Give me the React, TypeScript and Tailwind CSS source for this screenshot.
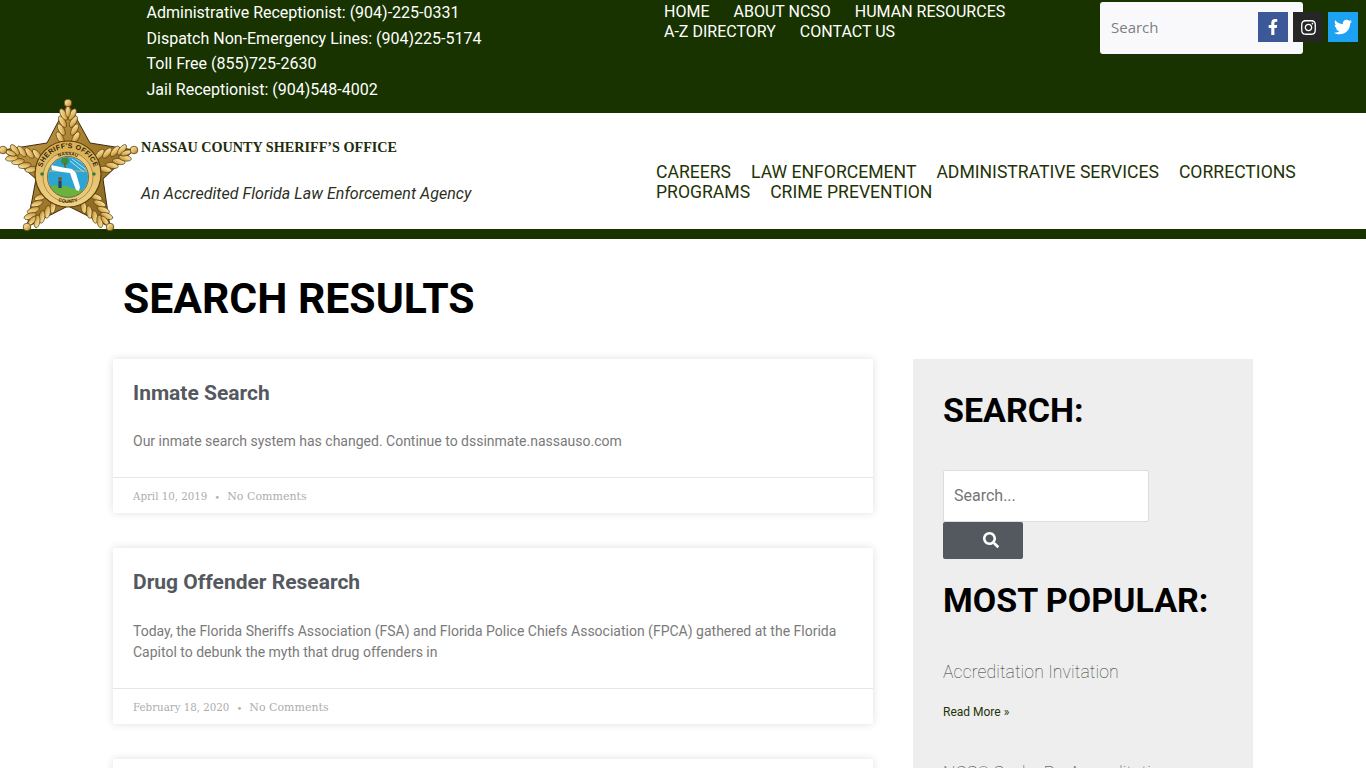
import React from "react";
import { FaFacebookF, FaInstagram, FaTwitter, FaSearch } from "react-icons/fa";

const tips: [number, number][] = [[68, 102], [134, 149], [110, 226], [27, 226], [3, 149]];
const inner: [number, number][] = [[90, 142], [103, 178], [68, 205], [36, 178], [47, 142]];

function Arm({ tip }: { tip: [number, number] }) {
  const cx = 68, cy = 174;
  const angle = (Math.atan2(tip[1] - cy, tip[0] - cx) * 180) / Math.PI + 90;
  const len = Math.hypot(tip[0] - cx, tip[1] - cy);
  const leaves = [0.52, 0.63, 0.74, 0.84];
  return (
    <g transform={`rotate(${angle} ${cx} ${cy})`}>
      {leaves.map((t, i) => {
        const y = cy - len * t;
        const spread = 11 * (1 - t) + 2.6;
        return (
          <g key={i}>
            <ellipse cx={cx - spread} cy={y} rx={2.9} ry={6.4} transform={`rotate(-30 ${cx - spread} ${y})`} fill="url(#leaf)" stroke="#5c4210" strokeWidth=".7" />
            <ellipse cx={cx + spread} cy={y} rx={2.9} ry={6.4} transform={`rotate(30 ${cx + spread} ${y})`} fill="url(#leaf)" stroke="#5c4210" strokeWidth=".7" />
          </g>
        );
      })}
      <ellipse cx={cx} cy={cy - len * 0.88} rx={2.5} ry={5.6} fill="url(#leaf)" stroke="#5c4210" strokeWidth=".7" />
    </g>
  );
}

function Star() {
  const pts: string[] = [];
  tips.forEach((t, i) => {
    pts.push(t.join(","));
    pts.push(inner[i].join(","));
  });
  return (
    <svg viewBox="0 0 140 136" width="140" height="136" className="block shrink-0 -mt-[16px] -mb-[4px] relative z-10">
      <defs>
        <linearGradient id="gold" x1="0" y1="0" x2="1" y2="1">
          <stop offset="0" stopColor="#cfa653" />
          <stop offset=".5" stopColor="#a37c2e" />
          <stop offset="1" stopColor="#7d5c1b" />
        </linearGradient>
        <linearGradient id="leaf" x1="0" y1="0" x2="1" y2="1">
          <stop offset="0" stopColor="#fff2c4" />
          <stop offset=".55" stopColor="#e3bb63" />
          <stop offset="1" stopColor="#a0762a" />
        </linearGradient>
        <linearGradient id="ring" x1="0" y1="0" x2="0" y2="1">
          <stop offset="0" stopColor="#d9ac4f" />
          <stop offset="1" stopColor="#efd388" />
        </linearGradient>
        <path id="arcTop" d="M41 174 A27 27 0 0 1 95 174" fill="none" />
        <path id="arcTop2" d="M46 176 A22 22 0 0 1 90 176" fill="none" />
        <path id="arcBottom" d="M42 176 A26 26 0 0 0 94 176" fill="none" />
        <clipPath id="seal"><circle cx="68" cy="176" r="20" /></clipPath>
      </defs>
      <g transform="translate(0 -96)">
        <polygon points={pts.join(" ")} fill="url(#gold)" stroke="#3f2d08" strokeWidth="1" strokeLinejoin="round" />
        {tips.map((t, i) => <Arm key={i} tip={t} />)}
        {tips.map((t, i) => <circle key={i} cx={t[0]} cy={t[1]} r="3.8" fill="url(#leaf)" stroke="#5c4210" strokeWidth=".8" />)}
        <circle cx="68" cy="173" r="33" fill="url(#ring)" stroke="#5a400d" strokeWidth="1.2" />
        <circle cx="68" cy="176" r="25" fill="#e9c878" stroke="#8a661f" strokeWidth=".6" />
        <text fontFamily="'Liberation Sans',sans-serif" fontWeight="700" fontSize="7" fill="#2d230a" letterSpacing=".35"><textPath href="#arcTop" startOffset="50%" textAnchor="middle">SHERIFF'S OFFICE</textPath></text>
        <text fontFamily="'Liberation Sans',sans-serif" fontWeight="700" fontSize="4.6" fill="#2d230a"><textPath href="#arcTop2" startOffset="50%" textAnchor="middle">NASSAU</textPath></text>
        <circle cx="68" cy="176" r="20.5" fill="#f7f0cf" />
        <g clipPath="url(#seal)">
          <rect x="46" y="154" width="44" height="44" fill="#2aa5d4" />
          <path d="M72 158 L88 170 M75 157 L89 166 M70 160 L84 171 M78 157 L90 162" stroke="#d9eff8" strokeWidth=".8" />
          <rect x="47" y="169.6" width="42" height=".9" fill="#d9bb67" />
          <path d="M46 186 Q62 182 72 187 Q82 191 90 188 L90 198 L46 198 Z" fill="#69b23c" />
          <circle cx="65" cy="160" r="3.8" fill="#3f8a3c" />
          <rect x="64.4" y="162" width="1.2" height="6" fill="#6b5120" />
          <path d="M51 164 L63 166.5 L72 168 L76 172 L80 186 L79 190 L76 189 L72 178 L70 172 L62 171 L52 169 Z" fill="#ffffff" />
          <circle cx="60" cy="178" r="2" fill="#7a5a22" />
          <rect x="58.4" y="180" width="3.2" height="7" fill="#24446e" />
        </g>
        <circle cx="68" cy="176" r="20.5" fill="none" stroke="#4a380d" strokeWidth=".7" />
        <circle cx="42" cy="173" r="1.7" fill="#2e7a3a" />
        <circle cx="94" cy="173" r="1.7" fill="#2e7a3a" />
        <text fontFamily="'Liberation Sans',sans-serif" fontWeight="700" fontSize="4.8" fill="#2d230a"><textPath href="#arcBottom" startOffset="50%" textAnchor="middle">COUNTY</textPath></text>
      </g>
    </svg>
  );
}

function Card({ title, text, date, two }: { title: string; text: React.ReactNode; date: string; two?: boolean }) {
  return (
    <article className="bg-white rounded-[2px] shadow-[0_0_8px_rgba(0,0,0,0.13)]">
      <div className="px-5 pt-[20px] pb-[25px] border-b border-[#e6e6e6]">
        <h3 className="text-[21px] leading-[28px] font-bold text-[#54595f]">{title}</h3>
        <p className={`${two ? "mt-[25px]" : "mt-[24px]"} text-[14px] leading-[21px] text-[#7a7a7a]`}>{text}</p>
      </div>
      <div className="px-5 h-[35px] pt-[3px] flex items-center font-['DejaVu_Serif',serif] text-[#adadad]">
        <span className="text-[10.25px]">{date}</span>
        <span className="mx-[7px] text-[10px]">•</span>
        <span className="text-[11px]">No Comments</span>
      </div>
    </article>
  );
}

export default function App() {
  return (
    <div className="h-[768px] overflow-hidden bg-white font-['Roboto',sans-serif]">
      <header>
        <div className="h-[113px] bg-[#183300] text-white flex">
          <div className="w-[664px] pl-[146.5px] text-[16px] leading-[25.6px] shrink-0">
            <p>Administrative Receptionist: (904)-225-0331</p>
            <p>Dispatch Non-Emergency Lines: (904)225-5174</p>
            <p>Toll Free (855)725-2630</p>
            <p>Jail Receptionist: (904)548-4002</p>
          </div>
          <nav className="w-[436px] shrink-0 pt-[2px] text-[16px] leading-[20px] flex flex-wrap content-start gap-x-[24px]">
            <span>HOME</span><span>ABOUT NCSO</span><span>HUMAN RESOURCES</span>
            <span>A-Z DIRECTORY</span><span>CONTACT US</span>
          </nav>
          <div className="flex items-start">
            <div className="mt-[2px] w-[203px] h-[52px] bg-[#f9f9fb] rounded-[3px] pl-[11px] pb-[1px] flex items-center font-['Open_Sans',sans-serif] text-[15px] text-[#7c7f83]">Search</div>
            <div className="flex gap-[5px] mt-[12px] -ml-[45px]">
              <span className="w-[30px] h-[30px] bg-[#3b5998] flex items-center justify-center text-[16px]"><FaFacebookF /></span>
              <span className="w-[30px] h-[30px] bg-[#262626] flex items-center justify-center text-[17px]"><FaInstagram /></span>
              <span className="w-[30px] h-[30px] bg-[#1da1f2] flex items-center justify-center text-[18px]"><FaTwitter /></span>
            </div>
          </div>
        </div>
        <div className="h-[126px] border-b-[10px] border-[#183300] flex">
          <Star />
          <div className="w-[516px] shrink-0 pl-[1px]">
            <p className="mt-[24px] font-['Liberation_Serif',serif] font-bold text-[14.2px] leading-[20px] text-[#1d2d0c]">NASSAU COUNTY SHERIFF’S OFFICE</p>
            <p className="mt-[27px] italic text-[16px] leading-[20px] tracking-[0.05px] text-[#2b2f22]">An Accredited Florida Law Enforcement Agency</p>
          </div>
          <nav className="pt-[49px] w-[690px] text-[17.6px] leading-[20px] text-[#1f3307] flex flex-wrap content-start gap-x-[20px]">
            <span>CAREERS</span><span>LAW ENFORCEMENT</span><span>ADMINISTRATIVE SERVICES</span><span>CORRECTIONS</span>
            <span>PROGRAMS</span><span>CRIME PREVENTION</span>
          </nav>
        </div>
      </header>
      <main className="w-[1140px] mx-auto">
        <h1 className="pl-[10px] pt-[33px] h-[120px] text-[42.7px] leading-[52px] font-bold text-black">SEARCH RESULTS</h1>
        <div className="flex gap-[40px] items-start">
          <div className="w-[760px] flex flex-col gap-[35px]">
            <Card title="Inmate Search" text="Our inmate search system has changed. Continue to dssinmate.nassauso.com" date="April 10, 2019" />
            <Card two title="Drug Offender Research" text="Today, the Florida Sheriffs Association (FSA) and Florida Police Chiefs Association (FPCA) gathered at the Florida Capitol to debunk the myth that drug offenders in" date="February 18, 2020" />
            <Card title="Jail Information" text="Information about the Nassau County Jail." date="March 2, 2020" />
          </div>
          <aside className="w-[340px] h-[480px] bg-[#eeeeee] pl-[30px] pr-[20px] pt-[29px]">
            <h2 className="text-[34px] leading-[44px] font-bold text-black">SEARCH:</h2>
            <div className="mt-[38px] w-[206px] h-[52px] bg-white border border-[#dddddd] rounded-[2px] pl-[10px] flex items-center text-[16px] text-[#757575]">Search...</div>
            <div className="w-[80px] h-[37px] bg-[#54595f] rounded-[2px] flex items-center justify-center pl-[16px] pb-[2px] text-white text-[16px]"><FaSearch /></div>
            <h2 className="mt-[19px] text-[34px] leading-[44px] font-bold text-black">MOST POPULAR:</h2>
            <p className="mt-[37px] text-[17.6px] leading-[27px] font-thin tracking-[0.1px] text-[#333333]">Accreditation Invitation</p>
            <p className="mt-[17px] text-[12px] leading-[18px] font-normal text-[#1f3307]">Read More »</p>
            <p className="mt-[39px] text-[17.6px] leading-[27px] font-thin tracking-[0.1px] text-[#333333]">NCSO Seeks Re-Accreditation</p>
          </aside>
        </div>
      </main>
    </div>
  );
}
